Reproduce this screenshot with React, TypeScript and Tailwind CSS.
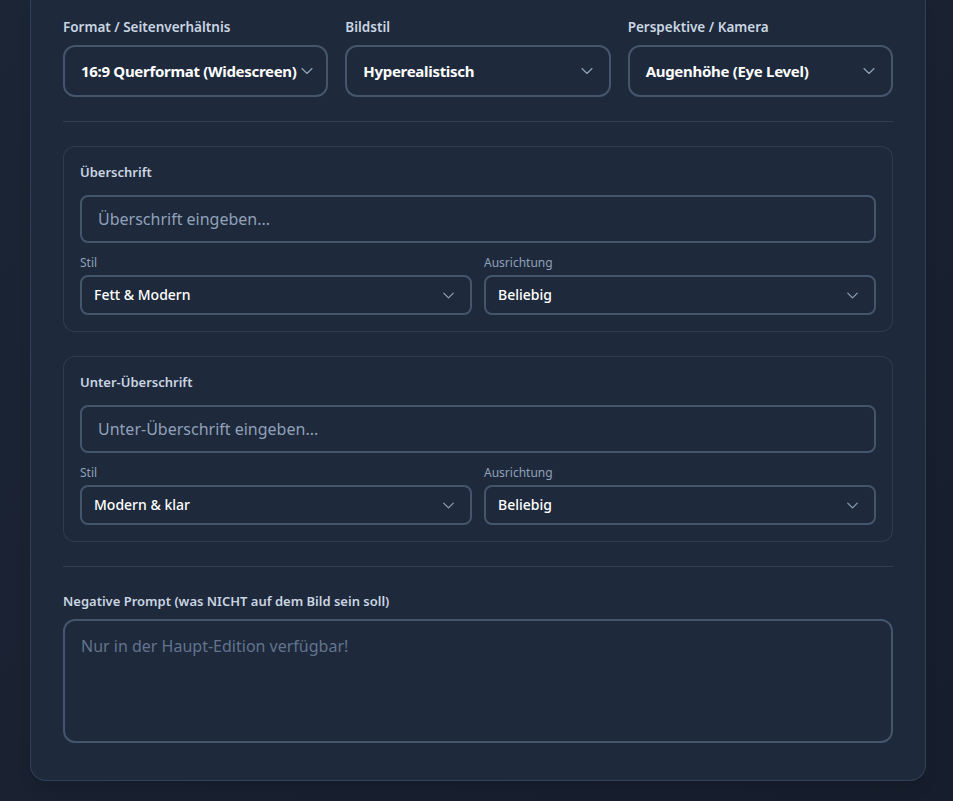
import { ChevronDown } from "lucide-react"

const font = { fontFamily: '"Segoe UI", "Noto Sans", "Open Sans", sans-serif' }

function BigSelect({ label, value }: { label: string; value: string }) {
  return (
    <div className="flex flex-col">
      <span className="mb-2 text-[13.5px] font-semibold leading-5 text-slate-300">{label}</span>
      <div className="flex h-[52px] items-center justify-between rounded-xl border-2 border-slate-600 bg-[#1e293b] pl-4 pr-3">
        <span className="whitespace-nowrap text-[15px] font-bold tracking-[-0.3px] text-white">{value}</span>
        <ChevronDown size={20} strokeWidth={1.4} className="shrink-0 text-slate-400" />
      </div>
    </div>
  )
}

function SmallSelect({ label, value }: { label: string; value: string }) {
  return (
    <div className="flex flex-col">
      <span className="mb-1 text-xs leading-4 text-slate-400">{label}</span>
      <div className="flex h-10 items-center justify-between rounded-lg border-2 border-slate-600 bg-[#1e293b] pl-3 pr-3">
        <span className="text-sm font-medium text-white">{value}</span>
        <ChevronDown size={19} strokeWidth={1.5} className="text-slate-400" />
      </div>
    </div>
  )
}

function TextBlock({ title, placeholder, stil }: { title: string; placeholder: string; stil: string }) {
  return (
    <div className="rounded-xl border border-slate-700/80 bg-[#1e293b] px-4 pb-4 pt-[15px]">
      <div className="text-[13px] font-semibold leading-5 text-slate-300">{title}</div>
      <div className="mt-[13px] flex h-12 items-center rounded-lg border-2 border-slate-600 px-4 text-base text-slate-400">
        {placeholder}
      </div>
      <div className="mt-3 grid grid-cols-2 gap-3">
        <SmallSelect label="Stil" value={stil} />
        <SmallSelect label="Ausrichtung" value="Beliebig" />
      </div>
    </div>
  )
}

export default function App() {
  return (
    <div style={font} className="min-h-[801px] bg-gradient-to-br from-[#1c2535] to-[#161e2d] pb-5 pl-[30px] pr-[27px]">
      <div className="rounded-b-2xl border border-t-0 border-slate-700 bg-[#1e293b] px-8 pb-[37px] pt-[17px] shadow-lg">
        <div className="grid grid-cols-3 gap-[17px]">
          <BigSelect label="Format / Seitenverhältnis" value="16:9 Querformat (Widescreen)" />
          <BigSelect label="Bildstil" value="Hyperealistisch" />
          <BigSelect label="Perspektive / Kamera" value="Augenhöhe (Eye Level)" />
        </div>
        <div className="my-6 h-px bg-slate-700" />
        <div className="flex flex-col gap-6">
          <TextBlock title="Überschrift" placeholder="Überschrift eingeben..." stil="Fett & Modern" />
          <TextBlock title="Unter-Überschrift" placeholder="Unter-Überschrift eingeben..." stil="Modern & klar" />
        </div>
        <div className="my-6 h-px bg-slate-700" />
        <div className="text-[13px] font-semibold leading-5 text-slate-300">
          Negative Prompt (was NICHT auf dem Bild sein soll)
        </div>
        <div className="mt-2 h-[124px] rounded-xl border-2 border-slate-600 px-4 pt-[13px] text-base text-slate-500">
          Nur in der Haupt-Edition verfügbar!
        </div>
      </div>
    </div>
  )
}
